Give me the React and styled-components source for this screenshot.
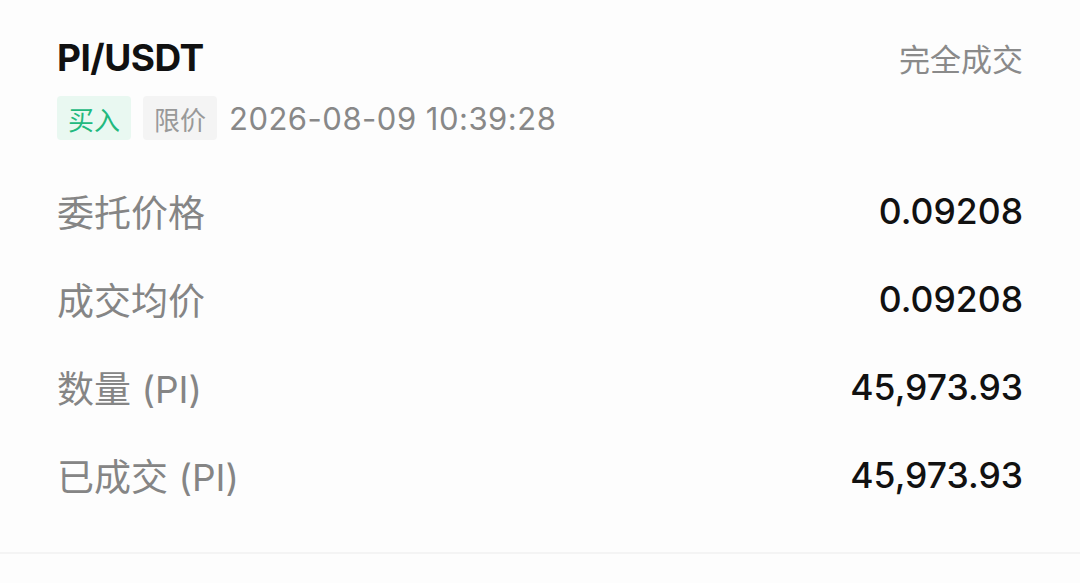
import React from "react";
import styled, { createGlobalStyle } from "styled-components";

const Global = createGlobalStyle`
  html, body { margin: 0; padding: 0; background: #fdfdfd; }
  body { font-family: Inter, "Noto Sans CJK SC", sans-serif; -webkit-font-smoothing: antialiased; }
`;

const Card = styled.div`
  box-sizing: border-box;
  height: 554px;
  padding: 30px 57px 0 57px;
  border-bottom: 2px solid #f4f4f4;
  display: flex;
  flex-direction: column;
`;

const TopRow = styled.div`
  display: flex;
  justify-content: space-between;
  align-items: flex-start;
  height: 56px;
`;

const Title = styled.div`
  font-family: Inter, "Noto Sans CJK SC", sans-serif;
  font-size: 37px;
  font-weight: 700;
  color: #111;
  letter-spacing: -0.5px;
  line-height: 56px;
`;

const Status = styled.div`
  font-family: "Noto Sans CJK SC", sans-serif;
  font-size: 31px;
  color: #8a8a8a;
  line-height: 56px;
`;

const MetaRow = styled.div`
  display: flex;
  align-items: center;
  gap: 12px;
  margin-top: 10px;
`;

const Tag = styled.span`
  display: inline-flex;
  align-items: center;
  justify-content: center;
  width: 74px;
  height: 44px;
  border-radius: 4px;
  font-family: "Noto Sans CJK SC", sans-serif;
  font-size: 26px;
  background: ${(p) => (p.$kind === "buy" ? "#e9f8f1" : "#f4f4f4")};
  color: ${(p) => (p.$kind === "buy" ? "#22b97e" : "#999")};
`;

const DateText = styled.span`
  font-family: Inter, sans-serif;
  font-size: 31px;
  color: #888;
  letter-spacing: 0.5px;
`;

const Rows = styled.div`
  display: flex;
  flex-direction: column;
  margin-top: 27px;
`;

const Row = styled.div`
  display: flex;
  justify-content: space-between;
  align-items: center;
  height: 88px;
`;

const Label = styled.span`
  font-family: "Noto Sans CJK SC", sans-serif;
  font-size: 37px;
  color: #858585;
`;

const Paren = styled.span`
  font-family: Inter, sans-serif;
  font-weight: 400;
`;

const Value = styled.span`
  font-family: Inter, sans-serif;
  font-size: 35.5px;
  font-weight: 500;
  color: #111;
`;

const rows = [
  { label: "委托价格", value: "0.09208" },
  { label: "成交均价", value: "0.09208" },
  { label: "数量", unit: " (PI)", value: "45,973.93" },
  { label: "已成交", unit: " (PI)", value: "45,973.93" },
];

export default function App() {
  return (
    <>
      <Global />
      <Card>
        <TopRow>
          <Title>PI/USDT</Title>
          <Status>完全成交</Status>
        </TopRow>
        <MetaRow>
          <Tag $kind="buy">买入</Tag>
          <Tag $kind="limit">限价</Tag>
          <DateText>2026-08-09 10:39:28</DateText>
        </MetaRow>
        <Rows>
          {rows.map((r, i) => (
            <Row key={i}>
              <Label>
                {r.label}
                {r.unit && <Paren>{r.unit}</Paren>}
              </Label>
              <Value>{r.value}</Value>
            </Row>
          ))}
        </Rows>
      </Card>
    </>
  );
}
